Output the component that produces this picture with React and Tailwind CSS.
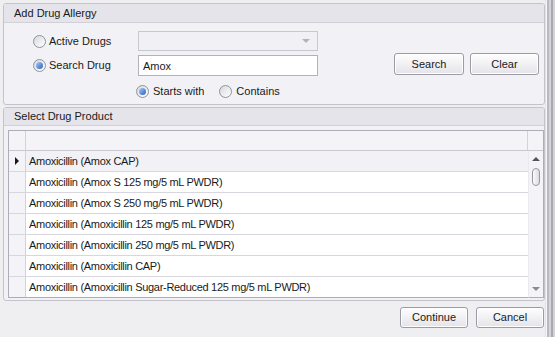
import React, { useState } from 'react';

const drugs = [
  'Amoxicillin (Amox CAP)',
  'Amoxicillin (Amox S 125 mg/5 mL PWDR)',
  'Amoxicillin (Amox S 250 mg/5 mL PWDR)',
  'Amoxicillin (Amoxicillin 125 mg/5 mL PWDR)',
  'Amoxicillin (Amoxicillin 250 mg/5 mL PWDR)',
  'Amoxicillin (Amoxicillin CAP)',
  'Amoxicillin (Amoxicillin Sugar-Reduced 125 mg/5 mL PWDR)',
];

// kleine radio knop in XP-stijl
const Radio = ({ checked }) => (
  <span className="w-[13px] h-[13px] rounded-full border border-[#8e939a] bg-linear-to-br from-[#d9d9de] to-[#ffffff] flex items-center justify-center shrink-0">
    {checked && (
      <span className="w-[7px] h-[7px] rounded-full bg-linear-to-br from-[#a9ccf7] to-[#2a5fc0]" />
    )}
  </span>
);

const Button = ({ children, className }) => (
  <button
    type="button"
    className={
      'rounded-[3px] border border-[#9c9ba5] bg-linear-to-b from-[#fefefe] to-[#e4e3e9] shadow-[inset_0_0_0_1px_#ffffff] text-[11px] text-[#1a1a1a] flex items-center justify-center shrink-0 ' +
      className
    }
  >
    {children}
  </button>
);

const App = () => {
  const [mode, setMode] = useState('search');
  const [match, setMatch] = useState('starts');
  const [query, setQuery] = useState('Amox');

  return (
    <div className="w-[555px] h-[337px] bg-[#efeff1] flex overflow-hidden font-['Liberation_Sans',Arial,sans-serif] text-[11px] text-[#1a1a1a]">
      <div className="w-[545px] flex flex-col pl-[3px] pt-[3px]">
        {/* Add Drug Allergy */}
        <div className="w-[542px] h-[102px] shrink-0 border border-[#c4c2cb] rounded-[3px] bg-[#f2f1f6] flex flex-col">
          <div className="h-[19px] shrink-0 bg-[#e5e4ea] border-b border-[#d2d1d8] rounded-t-[2px] flex items-center pl-[10px]">
            Add Drug Allergy
          </div>
          <div className="flex flex-1">
            <div className="flex flex-col pl-[29px] pt-[8px] w-[330px]">
              <div className="flex items-center h-[20px]">
                <div className="w-[105px] flex items-center gap-[3px]" onClick={() => setMode('active')}>
                  <Radio checked={mode === 'active'} />
                  <span>Active Drugs</span>
                </div>
                <div className="w-[180px] h-[20px] border border-[#c9c7d0] bg-[#f1f0f5] flex items-center justify-end pr-[7px]">
                  <span className="w-0 h-0 border-l-[4px] border-r-[4px] border-t-[4px] border-l-transparent border-r-transparent border-t-[#b4b3ba]" />
                </div>
              </div>
              <div className="flex items-center h-[21px] mt-[4px]">
                <div className="w-[105px] flex items-center gap-[3px]" onClick={() => setMode('search')}>
                  <Radio checked={mode === 'search'} />
                  <span>Search Drug</span>
                </div>
                <input
                  value={query}
                  onChange={(e) => setQuery(e.target.value)}
                  className="w-[180px] h-[21px] border border-[#b3b1bb] bg-white px-[4px] outline-none text-[11px]"
                />
              </div>
              <div className="flex items-center h-[14px] mt-[8px] ml-[103px]">
                <div className="flex items-center gap-[4px]" onClick={() => setMatch('starts')}>
                  <Radio checked={match === 'starts'} />
                  <span>Starts with</span>
                </div>
                <div className="flex items-center gap-[4px] ml-[15px]" onClick={() => setMatch('contains')}>
                  <Radio checked={match === 'contains'} />
                  <span>Contains</span>
                </div>
              </div>
            </div>
            <div className="flex-1 flex items-start justify-end gap-[6px] pt-[30px] pr-[5px]">
              <Button className="w-[70px] h-[22px]">Search</Button>
              <Button className="w-[69px] h-[22px]">Clear</Button>
            </div>
          </div>
        </div>

        {/* Select Drug Product */}
        <div className="w-[542px] h-[194px] shrink-0 mt-[2px] border border-[#c4c2cb] rounded-[3px] bg-[#f2f1f6] flex flex-col">
          <div className="h-[18px] shrink-0 bg-[#e5e4ea] border-b border-[#d2d1d8] rounded-t-[2px] flex items-center pl-[10px]">
            Select Drug Product
          </div>
          <div className="ml-[4px] mt-[4px] w-[536px] h-[168px] shrink-0 border-t border-l border-r border-[#aeacb6] bg-white flex flex-col">
            <div className="h-[20px] shrink-0 bg-[#f4f3f8] border-b border-[#c9c7d0] flex">
              <div className="w-[17px] border-r border-[#d3d1d9]" />
              <div className="flex-1 border-r border-[#d3d1d9]" />
              <div className="w-[15px]" />
            </div>
            <div className="flex flex-1">
              <div className="flex-1 flex flex-col">
                {drugs.map((d, i) => (
                  <div
                    key={i}
                    className={
                      'h-[21px] shrink-0 flex border-b ' +
                      (i === drugs.length - 1 ? 'border-[#aeacb6] ' : 'border-[#d8d6de] ') +
                      (i === 0 ? 'bg-[#f2f1f6]' : 'bg-white')
                    }
                  >
                    <div className="w-[17px] bg-[#f4f3f8] border-r border-[#d3d1d9] flex items-center justify-center">
                      {i === 0 && (
                        <span className="w-0 h-0 border-t-[4px] border-b-[4px] border-l-[4px] border-t-transparent border-b-transparent border-l-[#1a1a1a]" />
                      )}
                    </div>
                    <div className="flex-1 flex items-center pl-[3px] whitespace-nowrap overflow-hidden tracking-[-0.3px]">{d}</div>
                  </div>
                ))}
              </div>
              <div className="w-[15px] bg-[#f4f3f8] flex flex-col items-center border-l border-b border-l-[#ebe9f0] border-b-[#aeacb6]">
                <span className="mt-[6px] w-0 h-0 border-l-[4px] border-r-[4px] border-b-[4px] border-l-transparent border-r-transparent border-b-[#55545c]" />
                <span className="mt-[7px] w-[8px] h-[18px] rounded-full border border-[#9897a1] bg-linear-to-r from-[#fbfbfd] to-[#dcdbe2]" />
                <span className="mt-auto mb-[6px] w-0 h-0 border-l-[4px] border-r-[4px] border-t-[4px] border-l-transparent border-r-transparent border-t-[#8a8990]" />
              </div>
            </div>
          </div>
        </div>

        <div className="flex justify-end gap-[8px] pt-[6px] pr-[1px]">
          <Button className="w-[68px] h-[21px]">Continue</Button>
          <Button className="w-[68px] h-[21px]">Cancel</Button>
        </div>
      </div>

      {/* rechter rand */}
      <div className="w-[10px] flex">
        <div className="w-[1px] bg-[#e2e1e6]" />
        <div className="w-[1px] bg-[#f7f7f9]" />
        <div className="w-[2px] bg-[#bab9c1]" />
        <div className="w-[2px] bg-[#d5d4db]" />
        <div className="w-[2px] bg-[#a9a8b1]" />
        <div className="w-[2px] bg-[#d3d2d8]" />
      </div>
    </div>
  );
};

export default App;
